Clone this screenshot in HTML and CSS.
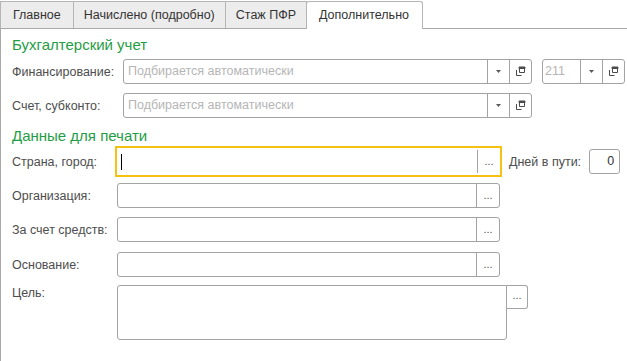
FILE: index.html
```html
<!DOCTYPE html>
<html lang="ru">
<head>
<meta charset="UTF-8">
<title>Дополнительно</title>
<link rel="stylesheet" href="styles.css">
</head>
<body>
<div class="tabs">
<div class="tab">Главное</div>
<div class="tab">Начислено (подробно)</div>
<div class="tab">Стаж ПФР</div>
<div class="tab active">Дополнительно</div>
</div>
<div class="panel">
<div class="group-title first">Бухгалтерский учет</div>
<div class="row">
<div class="label label-acc">Финансирование:</div>
<div class="field field-fin">
<span class="value placeholder">Подбирается автоматически</span>
<span class="btn"><svg class="arrow" width="5" height="3" viewBox="0 0 5 3"><path d="M0 0H5L2.5 3Z"/></svg></span>
<span class="btn"><svg class="open" width="11" height="11" viewBox="0 0 11 11"><path d="M4.5 1.5H9.5V6.5H4.5Z M4 1H10V2.5H4Z M1.5 4V9.5H6.5" fill="none"/></svg></span>
</div>
<div class="field field-acc">
<span class="value placeholder">211</span>
<span class="btn"><svg class="arrow" width="5" height="3" viewBox="0 0 5 3"><path d="M0 0H5L2.5 3Z"/></svg></span>
<span class="btn"><svg class="open" width="11" height="11" viewBox="0 0 11 11"><path d="M4.5 1.5H9.5V6.5H4.5Z M4 1H10V2.5H4Z M1.5 4V9.5H6.5" fill="none"/></svg></span>
</div>
</div>
<div class="row">
<div class="label label-acc">Счет, субконто:</div>
<div class="field field-fin">
<span class="value placeholder">Подбирается автоматически</span>
<span class="btn"><svg class="arrow" width="5" height="3" viewBox="0 0 5 3"><path d="M0 0H5L2.5 3Z"/></svg></span>
<span class="btn"><svg class="open" width="11" height="11" viewBox="0 0 11 11"><path d="M4.5 1.5H9.5V6.5H4.5Z M4 1H10V2.5H4Z M1.5 4V9.5H6.5" fill="none"/></svg></span>
</div>
</div>

<div class="group-title">Данные для печати</div>
<div class="row row-focus">
<div class="label label-print">Страна, город:</div>
<div class="field field-print focused">
<span class="value"><span class="caret"></span></span>
<span class="btn dots">...</span>
</div>
<div class="label label-days">Дней в пути:</div>
<div class="field field-days"><span class="value num">0</span></div>
</div>
<div class="row">
<div class="label label-print">Организация:</div>
<div class="field field-print">
<span class="value"></span>
<span class="btn dots">...</span>
</div>
</div>
<div class="row row-wide">
<div class="label label-print">За счет средств:</div>
<div class="field field-print">
<span class="value"></span>
<span class="btn dots">...</span>
</div>
</div>
<div class="row row-tight">
<div class="label label-print">Основание:</div>
<div class="field field-print">
<span class="value"></span>
<span class="btn dots">...</span>
</div>
</div>
<div class="row row-memo">
<div class="label label-print">Цель:</div>
<div class="memo"></div>
<div class="memo-btn dots">...</div>
</div>
</div>
</body>
</html>
```

FILE: styles.css
```css
html, body {
height: 100%;
}

body {
margin: 0;
background-color: #fff;
font-family: 'Liberation Sans', Arial, sans-serif;
font-size: 12.5px;
color: #4d4d4d;
display: flex;
flex-direction: column;
overflow: hidden;
}

.tabs {
display: flex;
padding-top: 1px;
height: 27px;
border-bottom: 1px solid #a9a9a9;
}

.tab {
height: 27px;
line-height: 26px;
padding: 0 10px;
box-sizing: border-box;
border: 1px solid #b5b5b5;
border-bottom: none;
margin-left: -1px;
background-color: #ececec;
color: #333;
}

.tab:first-child {
margin-left: 0;
padding: 0 12px 0 12px;
}

.tab.active {
height: 28px;
background-color: #fff;
border-radius: 3px 3px 0 0;
padding: 0 13px 0 12px;
position: relative;
}

.panel {
flex: 1;
border-left: 1px solid #a9a9a9;
padding-left: 11px;
}

.group-title {
font-size: 15px;
line-height: 18px;
color: #1f9d45;
margin-top: 0;
margin-bottom: 1px;
}

.group-title.first {
margin-top: 7px;
margin-bottom: 5px;
}

.row {
display: flex;
align-items: center;
height: 25px;
margin-bottom: 9px;
}

.row-wide {
margin-bottom: 10px;
}

.row-tight {
margin-bottom: 8px;
}

.label {
flex: none;
white-space: nowrap;
}

.label-acc {
width: 111px;
}

.label-print {
width: 105px;
}

.field {
flex: none;
display: flex;
height: 25px;
box-sizing: border-box;
border: 1px solid #a3a3a3;
border-radius: 3px;
background-color: #fff;
}

.field .value {
flex: 1;
padding-left: 4px;
line-height: 23px;
white-space: nowrap;
overflow: hidden;
}

.placeholder {
color: #b5b5b5;
}

.btn {
flex: none;
width: 21px;
border-left: 1px solid #a3a3a3;
display: flex;
align-items: center;
justify-content: center;
}

.arrow path {
fill: #5a5a5a;
}

.open path {
stroke: #4a4a4a;
stroke-width: 1;
}

.field-fin {
width: 409px;
}

.field-acc {
width: 83px;
margin-left: 10px;
}

.field-acc .value {
padding-left: 2px;
}

.field-print {
width: 383px;
}

.field-print .btn {
width: 22px;
}

.dots {
color: #555;
font-size: 11px;
line-height: 19px;
}

.row-focus {
height: 31px;
margin-bottom: 6px;
}

.field.focused {
height: 31px;
width: 387px;
margin-left: -2px;
border: 2px solid #f5c211;
border-radius: 0;
}

.field.focused .value {
padding-left: 4px;
display: flex;
align-items: center;
}

.field.focused .btn {
width: 22px;
margin: 2px 0;
}

.caret {
display: block;
width: 1px;
height: 16px;
background-color: #000;
}

.label-days {
margin-left: 7px;
}

.field-days {
width: 31px;
margin-left: 8px;
}

.field-days .value.num {
text-align: right;
padding-right: 5px;
color: #333;
}

.row-memo {
align-items: flex-start;
height: 55px;
}

.row-memo .label {
padding-top: 1px;
}

.memo {
width: 390px;
height: 55px;
box-sizing: border-box;
border: 1px solid #a3a3a3;
border-radius: 3px 0 3px 3px;
}

.memo-btn {
width: 21px;
height: 24px;
box-sizing: border-box;
border: 1px solid #a3a3a3;
border-left: none;
border-radius: 0 3px 3px 0;
text-align: center;
}
```
